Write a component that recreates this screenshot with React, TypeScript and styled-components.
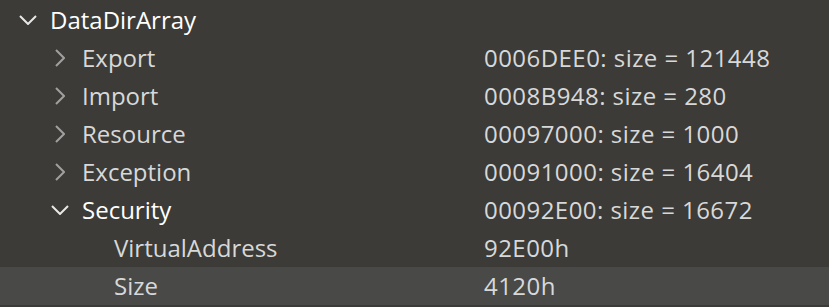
import * as React from "react";
import styled, { createGlobalStyle } from "styled-components";

const GlobalStyle = createGlobalStyle`
  html, body {
    margin: 0;
    padding: 0;
    background: #3c3b37;
  }
`;

type Expand = "open" | "closed" | "leaf";

interface Node {
  name: string;
  value?: string;
  level: number;
  expand: Expand;
  selected?: boolean;
}

const rows: Node[] = [
  { name: "DataDirArray", level: 0, expand: "open" },
  { name: "Export", value: "0006DEE0: size = 121448", level: 1, expand: "closed" },
  { name: "Import", value: "0008B948: size = 280", level: 1, expand: "closed" },
  { name: "Resource", value: "00097000: size = 1000", level: 1, expand: "closed" },
  { name: "Exception", value: "00091000: size = 16404", level: 1, expand: "closed" },
  { name: "Security", value: "00092E00: size = 16672", level: 1, expand: "open" },
  { name: "VirtualAddress", value: "92E00h", level: 2, expand: "leaf" },
  { name: "Size", value: "4120h", level: 2, expand: "leaf", selected: true },
];

const Tree = styled.div`
  width: 829px;
  height: 307px;
  padding-top: 1px;
  box-sizing: border-box;
  background: #3c3b37;
  font-family: "Open Sans", "Noto Sans", sans-serif;
  font-size: 24px;
  overflow: hidden;
`;

const Row = styled.div<{ $selected?: boolean }>`
  display: grid;
  grid-template-columns: 484px 1fr;
  height: 38px;
  align-items: center;
  background: ${(p) => (p.$selected ? "#494948" : "transparent")};
`;

const NameCell = styled.div<{ $level: number }>`
  display: flex;
  align-items: center;
  padding-left: ${(p) => 12 + p.$level * 32}px;
`;

const Twisty = styled.span`
  width: 32px;
  height: 38px;
  display: flex;
  align-items: center;
  justify-content: center;
  flex: none;
`;

const Label = styled.span<{ $bright?: boolean }>`
  margin-left: 6px;
  color: ${(p) => (p.$bright ? "#ffffff" : "#d8d8d8")};
  white-space: nowrap;
  line-height: 38px;
`;

const Value = styled.span`
  color: #d8d8d8;
  white-space: nowrap;
  line-height: 38px;
  letter-spacing: 0.45px;
`;

function Chevron({ expand }: { expand: Expand }) {
  if (expand === "leaf") return <Twisty />;
  if (expand === "open") {
    return (
      <Twisty>
        <svg width="18" height="10" viewBox="0 0 18 10">
          <path d="M1 1 L9 9 L17 1" fill="none" stroke="#e8e8e8" strokeWidth="2" />
        </svg>
      </Twisty>
    );
  }
  return (
    <Twisty>
      <svg width="10" height="18" viewBox="0 0 10 18">
        <path d="M1 1 L9 9 L1 17" fill="none" stroke="#a0a0a0" strokeWidth="2" />
      </svg>
    </Twisty>
  );
}

export default function App() {
  return (
    <>
      <GlobalStyle />
      <Tree>
        {rows.map((r) => (
          <Row key={r.name} $selected={r.selected}>
            <NameCell $level={r.level}>
              <Chevron expand={r.expand} />
              <Label $bright={r.expand === "open"}>{r.name}</Label>
            </NameCell>
            <Value>{r.value}</Value>
          </Row>
        ))}
      </Tree>
    </>
  );
}
